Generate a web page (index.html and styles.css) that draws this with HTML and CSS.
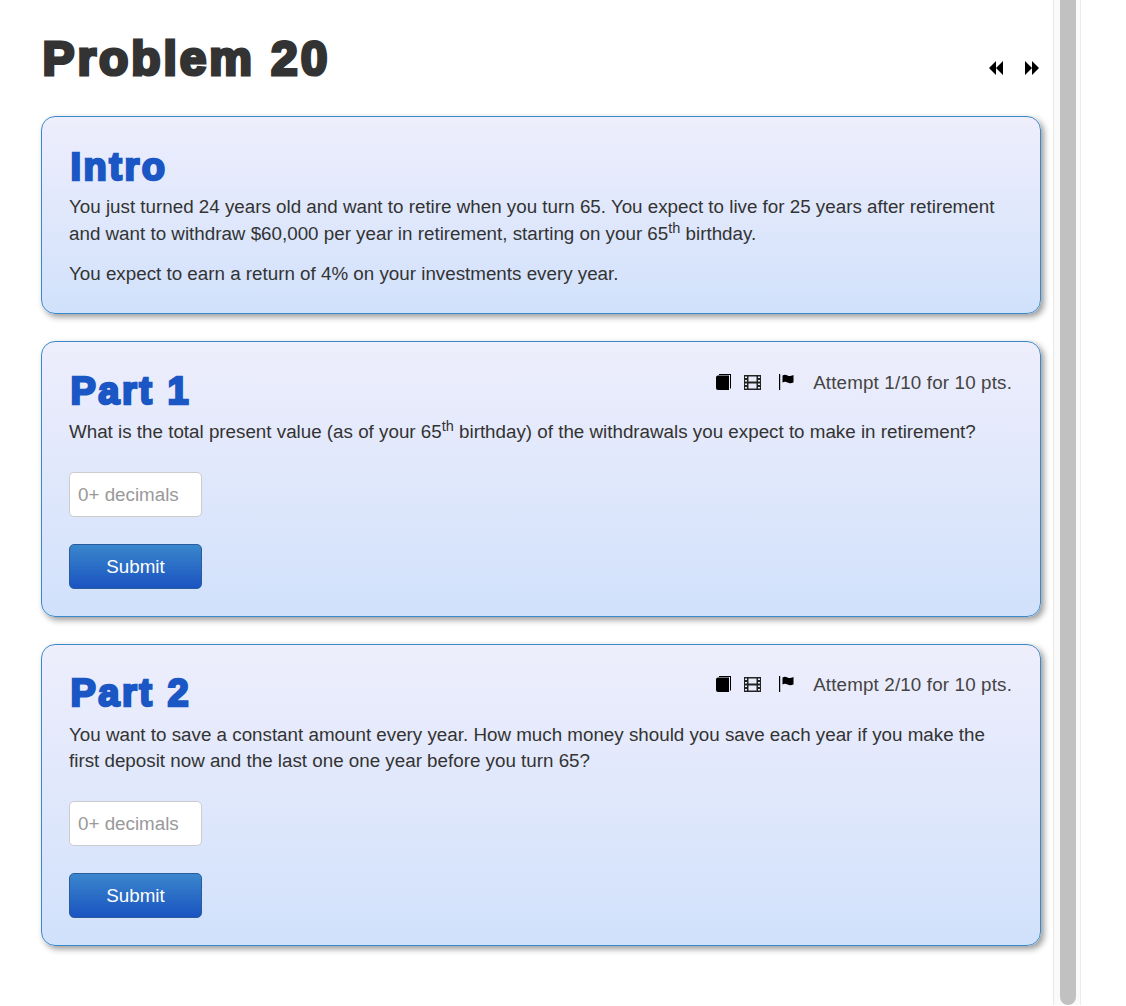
FILE: index.html
```html
<!DOCTYPE html>
<html lang="en">
  <head>
    <meta charset="UTF-8" />
    <title>Problem 20</title>
    <link rel="stylesheet" href="styles.css">
  </head>
  <body>
    <div class="page">
      <div class="content">
        <div class="top">
          <h1>Problem 20</h1>
          <div class="nav">
            <svg class="nav-icon" viewBox="0 0 16 14"><path d="M8 0v14L1 7zM15 0v14L8 7z"/></svg>
            <svg class="nav-icon" viewBox="0 0 16 14"><path d="M1 0v14l7-7zM8 0v14l7-7z"/></svg>
          </div>
        </div>

        <div class="card intro">
          <h2>Intro</h2>
          <p>You just turned 24 years old and want to retire when you turn 65. You expect to live for 25 years after retirement and want to withdraw $60,000 per year in retirement, starting on your 65<sup>th</sup> birthday.</p>
          <p>You expect to earn a return of 4% on your investments every year.</p>
        </div>

        <div class="card">
          <div class="part-head">
            <h2>Part 1</h2>
            <div class="tools">
              <svg class="tool book" viewBox="0 0 15 16"><path d="M3 0h12v14l-1 1V1H3z"/><path d="M2 1.500h11V16H2a2 2 0 0 1-2-2V3.500a2 2 0 0 1 2-2z"/></svg>
              <svg class="tool film" viewBox="0 0 17 15"><path fill="#222" fill-rule="evenodd" d="M0 0h17v15H0zM1 1.500v1.500h2V1.500zM1 5v1.500h2V5zM1 8.500v1.500h2V8.500zM1 12v1.500h2V12zM14 1.500v1.500h2V1.500zM14 5v1.500h2V5zM14 8.500v1.500h2V8.500zM14 12v1.500h2V12zM4.500 1.500V6.500h8V1.500zM4.500 8.500v5h8v-5z"/></svg>
              <svg class="tool flag" viewBox="0 0 15 16"><path d="M0 0h1.200v16H0z"/><path d="M3.500 1.500c2-1 3-1 5 0s3 .5 6-.5v7.500c-3 1-4 1-6 0s-3-1-5 0z"/></svg>
            </div>
            <span class="attempt">Attempt 1/10 for 10 pts.</span>
          </div>
          <p>What is the total present value (as of your 65<sup>th</sup> birthday) of the withdrawals you expect to make in retirement?</p>
          <input class="answer" type="text" placeholder="0+ decimals">
          <button class="submit">Submit</button>
        </div>

        <div class="card">
          <div class="part-head part-two">
            <h2>Part 2</h2>
            <div class="tools">
              <svg class="tool book" viewBox="0 0 15 16"><path d="M3 0h12v14l-1 1V1H3z"/><path d="M2 1.500h11V16H2a2 2 0 0 1-2-2V3.500a2 2 0 0 1 2-2z"/></svg>
              <svg class="tool film" viewBox="0 0 17 15"><path fill="#222" fill-rule="evenodd" d="M0 0h17v15H0zM1 1.500v1.500h2V1.500zM1 5v1.500h2V5zM1 8.500v1.500h2V8.500zM1 12v1.500h2V12zM14 1.500v1.500h2V1.500zM14 5v1.500h2V5zM14 8.500v1.500h2V8.500zM14 12v1.500h2V12zM4.500 1.500V6.500h8V1.500zM4.500 8.500v5h8v-5z"/></svg>
              <svg class="tool flag" viewBox="0 0 15 16"><path d="M0 0h1.200v16H0z"/><path d="M3.500 1.500c2-1 3-1 5 0s3 .5 6-.5v7.500c-3 1-4 1-6 0s-3-1-5 0z"/></svg>
            </div>
            <span class="attempt">Attempt 2/10 for 10 pts.</span>
          </div>
          <p>You want to save a constant amount every year. How much money should you save each year if you make the first deposit now and the last one one year before you turn 65?</p>
          <input class="answer" type="text" placeholder="0+ decimals">
          <button class="submit">Submit</button>
        </div>
      </div>

      <div class="scrollbar">
        <div class="thumb"></div>
      </div>
    </div>
  </body>
</html>
```

FILE: styles.css
```css
html,
body {
  margin: 0;
  height: 100%;
  overflow: hidden;
  background-color: #fff;
}

body {
  font-family: "Liberation Sans", Arial, sans-serif;
  font-size: 18.8px;
  line-height: 27px;
  color: #333;
}

.page {
  display: flex;
  width: 1081px;
  height: 1005px;
}

.content {
  width: 1000px;
  padding: 0 12px 0 41px;
}

.top {
  display: flex;
  justify-content: space-between;
  height: 116px;
}

h1,
h2 {
  margin: 0;
  font-weight: bold;
  -webkit-text-stroke: 3.2px currentColor;
}

h1 {
  margin-top: 32px;
  margin-left: 1.5px;
  font-size: 48px;
  line-height: 54px;
  letter-spacing: 2.9px;
  color: #333;
}

.nav {
  display: flex;
  gap: 20px;
  margin: 61px 1px 0 0;
}

.nav-icon {
  width: 16px;
  height: 14px;
}

.card {
  margin-bottom: 27px;
  padding: 27px;
  border: 1px solid #3a8acb;
  border-radius: 14px;
  background: linear-gradient(#eeeefc, #d1e1fb);
  box-shadow: 3px 3px 6px rgba(0, 0, 0, 0.4);
}

.card h2 {
  margin-left: 1.5px;
  font-size: 38px;
  line-height: 46px;
  letter-spacing: 2.5px;
  color: #1a56c4;
  -webkit-text-stroke-width: 2.5px;
}

.card p {
  margin: 0 0 13px;
  line-height: 26.8px;
  color: #333;
}

.intro {
  padding-bottom: 12.2px;
}

.intro h2 {
  margin-bottom: 4px;
}

sup {
  font-size: 14.5px;
  line-height: 0;
}

.part-head {
  display: flex;
  align-items: flex-start;
}

.part-head h2 {
  flex: 1;
  margin-top: -1px;
  margin-bottom: 5px;
}

.part-two {
  margin-top: -1px;
  margin-bottom: 1px;
}

.tools {
  display: flex;
  align-items: center;
  gap: 19px;
  height: 27px;
  margin-right: 19px;
}

.tool {
  width: 15px;
  height: 16px;
}

.book {
  margin-right: -6px;
}

.film {
  width: 17px;
  height: 15px;
  margin-right: -1px;
}

.attempt {
  margin-right: 1px;
  letter-spacing: 0.15px;
  color: #444;
}

.answer {
  display: block;
  box-sizing: border-box;
  width: 133px;
  height: 45px;
  margin: 26.2px 0 27px;
  padding: 1px 8px 0;
  border: 1px solid #ccc;
  border-radius: 5px;
  background-color: #fff;
  font: 18.8px "Liberation Sans", Arial, sans-serif;
}

.answer::placeholder {
  color: #999;
}

.submit {
  display: block;
  box-sizing: border-box;
  width: 133px;
  height: 45px;
  padding: 1px 0 0;
  border: 1px solid #2a5c9c;
  border-radius: 5px;
  background: linear-gradient(#3a86cc, #1a54c1);
  color: #fff;
  font: 18.8px "Liberation Sans", Arial, sans-serif;
}

.scrollbar {
  box-sizing: border-box;
  width: 28px;
  height: 100%;
  padding: 0 4px 0 6px;
  border-left: 1px solid #e8e8e8;
  border-right: 1px solid #ececec;
  background-color: #fafafa;
}

.thumb {
  width: 16px;
  height: 100%;
  border-radius: 0 0 8px 8px;
  background-color: #c1c1c1;
}
```
